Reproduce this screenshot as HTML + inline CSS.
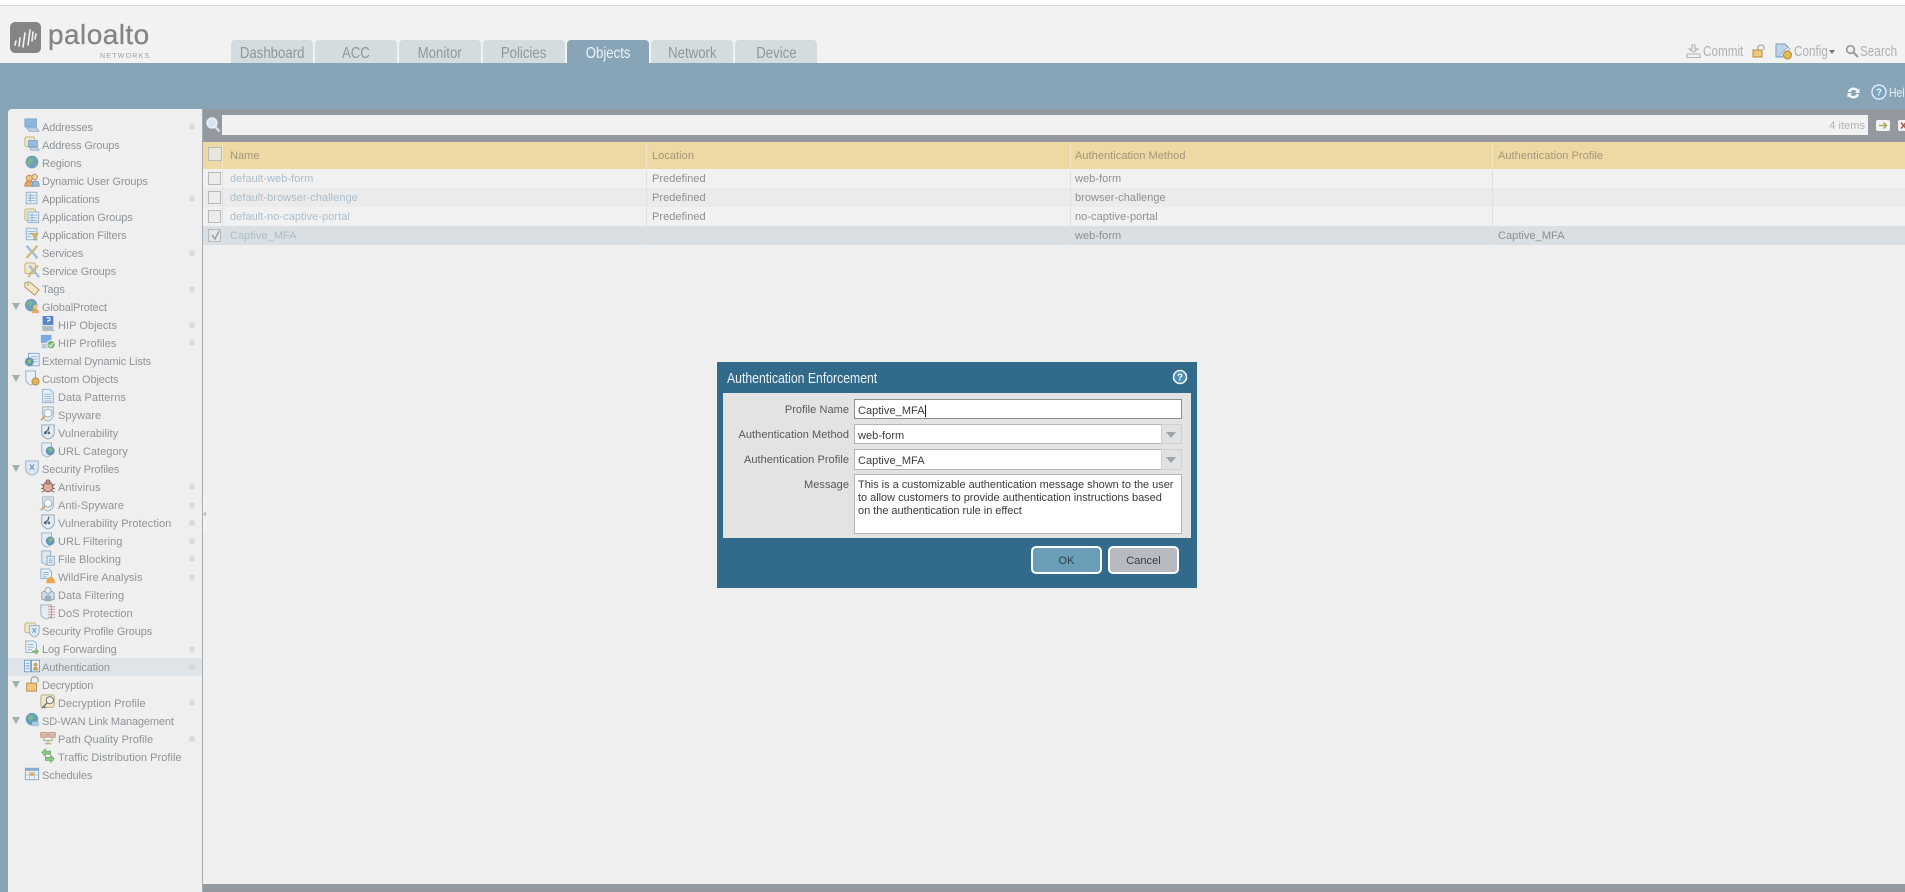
<!DOCTYPE html>
<html><head><meta charset="utf-8"><title>Authentication Enforcement</title>
<style>
html,body{margin:0;padding:0;width:1905px;height:892px;overflow:hidden;background:#fff}
body{position:relative;font:11px "Liberation Sans",sans-serif;letter-spacing:.05px;filter:blur(.3px)}
div,span,svg{position:absolute;box-sizing:border-box}
b{font-weight:normal;display:inline-block}
.tab{top:40px;height:23px;width:82px;background:#d3dcdf;border-radius:4px 4px 0 0;color:#8f979c;font:16px/27px "Liberation Sans",sans-serif;letter-spacing:0;text-align:center}
.tab b{transform:scaleX(.825)}
.tab.a{background:#88a4b7;color:#eef3f6}
.top{top:43px;font:15px/18px "Liberation Sans",sans-serif;color:#adb1b4;letter-spacing:0;transform:scaleX(.78);transform-origin:0 0}
.r{left:0;width:194px;height:18px}
.t{top:1px;line-height:18px;color:#8f9498;white-space:nowrap}
.t[style*="left:34px"]{letter-spacing:-.13px}
.dot{left:181px;top:6px;width:6px;height:6px;border-radius:50%;background:#dadada}
.ic{width:16px;height:16px;top:0}
.ic svg{width:16px;height:16px;left:0;top:0;opacity:.88}
.tri{left:4px;top:5px;width:0;height:0;border:4.5px solid transparent;border-top:7px solid #a3b0b0;border-bottom:0}
.row{left:203px;right:0;height:19px}
.cb{left:5px;top:3px;width:13px;height:13px;background:#ececec;border:1px solid #b9b9b9}
.n{left:27px;top:1px;line-height:19px;color:#abbeca;white-space:nowrap}
.c{top:1px;line-height:19px;color:#8f8f8f;white-space:nowrap}
.hd{color:#a0977a;line-height:27px;white-space:nowrap}
.lbl{width:126px;left:723px;text-align:right;color:#55595c;line-height:14px}
.f{left:854px;width:328px;background:#fff;border:1px solid #b5b5b5;color:#3b3b3b;padding:4px 0 0 3px;line-height:13px;white-space:nowrap}
.ab{left:1161px;width:21px;background:#dfe1e2;border:1px solid #d0d0d0}
.ab i{position:absolute;left:4px;top:7px;border:5.5px solid transparent;border-top:6px solid #9ba4aa;border-bottom:0}
.btn{top:546px;width:71px;height:28px;border:2px solid #fff;border-radius:5px;text-align:center;line-height:27px;color:#2f3f4a}
</style></head><body>
<svg width="0" height="0" style="left:0;top:0">
<defs>
<symbol id="mon" viewBox="0 0 18 18"><rect x="1" y="1" width="13" height="9" fill="#7fb0dc" stroke="#6f9cc4"/><path d="M3 11h11l3 4H6z" fill="#b9cfe2" stroke="#8aa6bf"/></symbol>
<symbol id="mong" viewBox="0 0 18 18"><rect x="1" y="1" width="11" height="11" rx="2" fill="#f1e7c6" stroke="#b8a76a"/><rect x="5" y="5" width="10" height="7" fill="#8db6dc" stroke="#6f9cc4"/><path d="M6 13h9l2 3H8z" fill="#b9cfe2" stroke="#8aa6bf"/></symbol>
<symbol id="glb" viewBox="0 0 18 18"><circle cx="9" cy="9" r="7.2" fill="#5f93b8"/><path d="M5 5l5-1 1 4-4 2-1 4-2-3zM12 11l3 0-2 4z" fill="#6fb07c"/></symbol>
<symbol id="usr" viewBox="0 0 18 18"><circle cx="6" cy="7" r="3.4" fill="#edc07a" stroke="#b5763c"/><path d="M1 16c0-4 2-6 5-6s5 2 5 6z" fill="#e79d50" stroke="#b5763c"/><circle cx="12" cy="5.5" r="3" fill="#f0d7a0" stroke="#a87c4c"/><path d="M9 16c0-4 1-6 4-6s4 2 4 6z" fill="#8db6dc" stroke="#5f86a8"/></symbol>
<symbol id="lst" viewBox="0 0 18 18"><rect x="2.5" y="2.5" width="12" height="13" fill="#e9f1f8" stroke="#7ba5c9"/><path d="M4 6h9M4 9h9M4 12h9M7 4v10" stroke="#7ba5c9" fill="none"/></symbol>
<symbol id="lstg" viewBox="0 0 18 18"><rect x="1" y="1" width="12" height="13" rx="2" fill="#f1e7c6" stroke="#b8a76a"/><rect x="4.500" y="4.500" width="12" height="12" fill="#e9f1f8" stroke="#7ba5c9"/><path d="M6 8h9M6 11h9M6 14h9M9 6v10" stroke="#7ba5c9" fill="none"/></symbol>
<symbol id="fil" viewBox="0 0 18 18"><rect x="2.500" y="2.500" width="12" height="13" fill="#e9f1f8" stroke="#7ba5c9"/><path d="M4 6h9M4 9h5M4 12h4" stroke="#7ba5c9"/><path d="M8 8h8l-3 4v4l-2-1v-3z" fill="#d9b25f" stroke="#a5843f" stroke-width=".6"/></symbol>
<symbol id="srv" viewBox="0 0 18 18"><path d="M3 2l5 6 3 3 4 5" stroke="#8db6dc" stroke-width="2.600" fill="none"/><path d="M15 2l-5 6-4 4-3 4" stroke="#c7b36b" stroke-width="2.600" fill="none"/></symbol>
<symbol id="srvg" viewBox="0 0 18 18"><rect x="1" y="1" width="12" height="12" rx="2" fill="#f1e7c6" stroke="#b8a76a"/><path d="M6 4l4 5 3 3 4 5" stroke="#8db6dc" stroke-width="2.400" fill="none"/><path d="M16 4l-5 5-3 3-3 5" stroke="#c7b36b" stroke-width="2.400" fill="none"/></symbol>
<symbol id="tag" viewBox="0 0 18 18"><path d="M1 3l5-1 11 9-5 6L1 8z" fill="#f5e6b8" stroke="#9a8a62"/><circle cx="4.500" cy="5" r="1" fill="#fff" stroke="#9a8a62" stroke-width=".6"/></symbol>
<symbol id="gp" viewBox="0 0 18 18"><circle cx="8" cy="8" r="7" fill="#5f93b8"/><path d="M3 6l5-3 2 4-4 2zM9 11l3 0-2 3z" fill="#6fb07c"/><circle cx="13" cy="10" r="2.500" fill="#edc07a"/><path d="M9 17c0-3 2-5 4-5s4 2 4 5z" fill="#e79d50"/></symbol>
<symbol id="hq" viewBox="0 0 18 18"><rect x="3" y="0" width="12" height="10" fill="#3f76c4"/><path d="M2 11h13v4l2 2H3z" fill="#aab6c2"/><path d="M7 2h4v3H9v2" stroke="#fff" fill="none" stroke-width="1.200"/></symbol>
<symbol id="hp" viewBox="0 0 18 18"><rect x="1" y="1" width="12" height="9" fill="#6fa3d8"/><path d="M2 11h11v5H2z" fill="#b6c3cd"/><circle cx="12.500" cy="12" r="4.800" fill="#6cb06a" stroke="#fff"/><path d="M10 12l2 2 3-4" stroke="#fff" fill="none"/></symbol>
<symbol id="edl" viewBox="0 0 18 18"><rect x="5" y="1.500" width="12" height="14" fill="#e9f1f8" stroke="#6f9cc4"/><path d="M8 5h7M8 8h7M8 11h7" stroke="#7ba5c9"/><circle cx="6" cy="11" r="5" fill="#4f8ab0"/><path d="M4 9l4-1 0 3-3 3z" fill="#7cb87c"/></symbol>
<symbol id="co" viewBox="0 0 18 18"><path d="M2 1h11v9c0 4-3 6-5.500 7C5 16 2 14 2 10z" fill="#e9f1f8" stroke="#88a4bd"/><circle cx="13" cy="13" r="4" fill="#e5ac3a" stroke="#a47a24"/></symbol>
<symbol id="dp" viewBox="0 0 18 18"><path d="M3 1.500h8l4 4v11H3z" fill="#e9f1f8" stroke="#7ba5c9"/><path d="M5 7h8M5 9.500h8M5 12h8M5 14.500h8" stroke="#7ba5c9"/></symbol>
<symbol id="spy" viewBox="0 0 18 18"><path d="M3 1h12v9c0 4-3 6-6 7-3-1-6-3-6-7z" fill="#e4ecf3" stroke="#88a4bd"/><circle cx="9" cy="8" r="4.500" fill="#f5f8fb" stroke="#8c9aa6"/><path d="M5.500 11.500L1 16" stroke="#d59a5a" stroke-width="2"/></symbol>
<symbol id="vul" viewBox="0 0 18 18"><path d="M2 1h14v9c0 4-4 6-7 7-3-1-7-3-7-7z" fill="#e4ecf3" stroke="#7e97ac"/><path d="M10 3l-1 4-3 2" stroke="#3d5a73" stroke-width="1.600" fill="none"/><circle cx="6" cy="10" r="1.700" fill="#3d5a73"/><circle cx="10" cy="10" r="1.500" fill="#3d5a73"/></symbol>
<symbol id="url" viewBox="0 0 18 18"><path d="M2 1h11v10c0 3-2 5-5 6-3-1-6-3-6-6z" fill="#e4ecf3" stroke="#88a4bd"/><circle cx="11.500" cy="10" r="5" fill="#4f8ab0"/><path d="M9 8l4-2 2 3-4 3z" fill="#73b56f"/></symbol>
<symbol id="shx" viewBox="0 0 18 18"><path d="M2 1h14v9c0 4-3 6-7 7-4-1-7-3-7-7z" fill="#dde8f2" stroke="#88a4bd"/><path d="M6.500 5l5 6M11.500 5l-5 6" stroke="#4a86c7" stroke-width="1.200"/></symbol>
<symbol id="av" viewBox="0 0 18 18"><circle cx="9" cy="10" r="5.500" fill="#e2a592" stroke="#6a4c44"/><circle cx="9" cy="4.500" r="2.400" fill="#b6837a" stroke="#6a4c44"/><path d="M1 7l4 2M1 12h3M2 16l3-2M17 7l-4 2M17 12h-3M16 16l-3-2" stroke="#6a4c44"/></symbol>
<symbol id="fb" viewBox="0 0 18 18"><path d="M2 1h10v13l-4 3-6-3z" fill="#dbe6f0" stroke="#88a4bd"/><rect x="8" y="7" width="8" height="10" fill="#e9f1f8" stroke="#6f9cc4"/><path d="M10 10h4M10 12h4M10 14h4" stroke="#6f9cc4"/></symbol>
<symbol id="wf" viewBox="0 0 18 18"><path d="M1 1h9l3 3v8H1z" fill="#e9f1f8" stroke="#7ba5c9"/><path d="M3 5h7M3 7.500h7M3 10h5" stroke="#7ba5c9"/><path d="M7 17c0-4 3-7 5-7s5 3 5 7z" fill="#ee9a32"/></symbol>
<symbol id="df" viewBox="0 0 18 18"><path d="M2 7c2-1 3-1 3-1h8s3 1 3 3v6l-7 2-7-2z" fill="#cdd9e3" stroke="#7e97ac"/><circle cx="9" cy="5" r="3.400" fill="#e6edf3" stroke="#7e97ac"/><path d="M5 16c0-4 2-6 4-6s4 2 4 6z" fill="#8fa8bc"/></symbol>
<symbol id="dos" viewBox="0 0 18 18"><path d="M1 1h12v10c0 3-2 5-6 6-3-1-6-3-6-6z" fill="#e4ecf3" stroke="#88a4bd"/><path d="M13 1v16M9 3h8M9 6h8M9 9h8M9 12h8M9 15h8" stroke="#c58b8b"/></symbol>
<symbol id="spg" viewBox="0 0 18 18"><rect x="1" y="1" width="12" height="11" rx="2" fill="#f1e7c6" stroke="#b8a76a"/><path d="M6 4h11v7c0 3-3 5-5.500 6C9 16 6 14 6 11z" fill="#dde8f2" stroke="#88a4bd"/><path d="M9.500 7l4 5M13.500 7l-4 5" stroke="#4a86c7"/></symbol>
<symbol id="log" viewBox="0 0 18 18"><path d="M2 1h9l3 3v10H2z" fill="#e9f1f8" stroke="#7ba5c9"/><path d="M4 5h7M4 8h7M4 11h5" stroke="#7ba5c9"/><path d="M9 12h4v-3l4 4-4 4v-3H9z" fill="#78ad5c"/></symbol>
<symbol id="au" viewBox="0 0 18 18"><rect x="0.500" y="2.500" width="7" height="13" fill="#eef3f8" stroke="#5f93c2"/><path d="M2 6h4M2 9h4M2 12h4" stroke="#5f93c2"/><rect x="8.500" y="2.500" width="9" height="13" fill="#eef3f8" stroke="#5f93c2"/><circle cx="13" cy="7.500" r="2.200" fill="#c49a5a"/><path d="M10 14c0-3 1-4 3-4s3 1 3 4z" fill="#c49a5a"/></symbol>
<symbol id="dec" viewBox="0 0 18 18"><path d="M8 8V5c0-2 1-4 4-4s4 2 4 4v2" stroke="#a5a5a5" stroke-width="1.600" fill="none"/><rect x="3" y="8" width="11" height="9" fill="#efc36e" stroke="#aa7b2d"/></symbol>
<symbol id="key" viewBox="0 0 18 18"><rect x="1" y="1" width="15" height="14" rx="2" fill="#f1e7c6" stroke="#a89a6a"/><circle cx="11" cy="7" r="4" fill="#f5f5ef" stroke="#555"/><path d="M8 10l-6 6M4 14l2 2" stroke="#555" stroke-width="1.400"/></symbol>
<symbol id="sd" viewBox="0 0 18 18"><circle cx="9" cy="8" r="7" fill="#4f92bd"/><path d="M4 6l5-3 2 4-4 3zM11 11l3-1-2 4z" fill="#73b56f"/><rect x="9" y="11" width="8" height="5" fill="#9fc5de"/></symbol>
<symbol id="pq" viewBox="0 0 18 18"><rect x="1" y="3" width="7" height="5" fill="#eecbc0" stroke="#c26f5a"/><rect x="10" y="3" width="7" height="5" fill="#eecbc0" stroke="#c26f5a"/><path d="M1 5.500h16M4.500 8v4h9V8M9 12v3M5 15.500h8" stroke="#9a9a6a" fill="none"/></symbol>
<symbol id="td" viewBox="0 0 18 18"><path d="M2 5l4-4v2.500h6V7H6v2.500zM16 12l-4 4.500V14H6v-3.500h6V8z" fill="#7ec07a" stroke="#4f9a4f" stroke-width=".7"/></symbol>
<symbol id="sch" viewBox="0 0 18 18"><rect x="1.500" y="2.500" width="15" height="13" fill="#eef3f8" stroke="#6f9cc4"/><rect x="1.500" y="2.500" width="15" height="3" fill="#7ba5c9"/><path d="M6 5v10M11.500 5v10M2 10h14" stroke="#9abad3"/><rect x="7" y="7" width="4" height="4" fill="#e5a23a"/></symbol>
</defs></svg>

<!-- header -->
<div style="left:0;top:5px;width:1905px;height:1px;background:#dcdcdc"></div>
<div style="left:0;top:6px;width:1905px;height:57px;background:#f2f2f2"></div>

<!-- logo -->
<svg style="left:10px;top:22px" width="31" height="31" viewBox="0 0 31 31"><rect width="31" height="31" rx="5" fill="#858585"/><path d="M5 23l1-4M9 24l1-8M13 25l2-14M18 23l2-15M22 19l1-9M25 17l1-5" stroke="#f2f2f2" stroke-width="1.600" stroke-linecap="round"/></svg>
<div style="left:48px;top:20px;font:28px/30px 'Liberation Sans',sans-serif;color:#858585;letter-spacing:.45px;-webkit-text-stroke:.3px #858585">paloalto</div>
<div style="left:100px;top:52px;font:7px/9px 'Liberation Sans',sans-serif;color:#a0a0a0;letter-spacing:1.25px">NETWORKS</div>

<div class="tab" style="left:231px"><b>Dashboard</b></div>
<div class="tab" style="left:315px"><b>ACC</b></div>
<div class="tab" style="left:399px"><b>Monitor</b></div>
<div class="tab" style="left:483px"><b>Policies</b></div>
<div class="tab a" style="left:567px"><b>Objects</b></div>
<div class="tab" style="left:651px"><b>Network</b></div>
<div class="tab" style="left:735px"><b>Device</b></div>

<!-- top right -->
<svg style="left:1686px;top:44px" width="15" height="15" viewBox="0 0 15 15"><path d="M6 1h3v4h3l-4.500 3L3 5h3zM1 10h13v3.500H1z" fill="none" stroke="#b3b3b3" stroke-width="1.100"/></svg>
<div class="top" style="left:1703px">Commit</div>
<svg style="left:1752px;top:44px" width="14" height="14" viewBox="0 0 14 14"><path d="M6 6V4c0-2 1-3 3-3s3 1 3 3v2" stroke="#aaa" fill="none" stroke-width="1.300"/><rect x="1" y="6" width="9" height="7" fill="#efc77d" stroke="#b98a38"/></svg>
<svg style="left:1775px;top:43px" width="18" height="17" viewBox="0 0 18 17"><path d="M1 1h9l3 3v10H1z" fill="#bcd3ea" stroke="#7e9fbe"/><path d="M4 13L13 4l2 2-9 8z" fill="#e8f0f6" stroke="#7e9fbe" stroke-width=".6"/><circle cx="12.500" cy="12" r="4" fill="#e6bd54" stroke="#ab8a30"/></svg>
<div class="top" style="left:1794px">Config</div>
<div style="left:1829px;top:50px;width:0;height:0;border:3.500px solid transparent;border-top:4px solid #777;border-bottom:0"></div>
<svg style="left:1845px;top:44px" width="14" height="14" viewBox="0 0 14 14"><circle cx="5.500" cy="5.500" r="3.800" fill="none" stroke="#9a9a9a" stroke-width="1.700"/><path d="M8.500 8.500L13 13" stroke="#9a9a9a" stroke-width="2.200"/></svg>
<div class="top" style="left:1860px">Search</div>

<!-- blue bar -->
<div style="left:0;top:63px;width:1905px;height:829px;background:#88a4b7"></div>
<svg style="left:1846px;top:86px" width="15" height="14" viewBox="0 0 15 14"><path d="M2 6c0-2.500 2.500-4.500 5.500-4.500 2 0 3.500 1 4.500 2l1.500-1v4.500H9l1.500-1.500C9.800 4.500 8.800 4 7.500 4 6 4 5 5 4.500 6zM13 8c0 2.500-2.500 4.500-5.500 4.500-2 0-3.500-1-4.500-2l-1.500 1V7H6L4.500 8.500C5.200 9.500 6.200 10 7.500 10 9 10 10 9 10.500 8z" fill="#f4f7f9"/></svg>
<svg style="left:1871px;top:84px" width="16" height="16" viewBox="0 0 16 16"><circle cx="8" cy="8" r="7" fill="#79a5c2" stroke="#e4edf3" stroke-width="1.400"/><text x="8" y="11.500" font-size="10" font-weight="bold" font-family="Liberation Sans" text-anchor="middle" fill="#eef4f8">?</text></svg>
<div style="left:1889px;top:85px;font:13px/15px 'Liberation Sans',sans-serif;color:#e8eef2;width:16px;overflow:hidden;white-space:nowrap;letter-spacing:0"><b style="transform:scaleX(.8);transform-origin:0 0">Help</b></div>

<!-- main -->
<div style="left:203px;top:109px;width:1702px;height:783px;background:#efefef"></div>
<div style="left:203px;top:109px;width:1702px;height:33px;background:#93999f"></div>
<div style="left:222px;top:115px;width:1646px;height:20px;background:#f2f2f2;color:#b3b3b3;text-align:right;line-height:22px;padding-right:3px">4 items</div>
<svg style="left:205px;top:116px" width="16" height="17" viewBox="0 0 16 17"><circle cx="7" cy="7" r="4.800" fill="#d5e5f0" stroke="#e8eff4" stroke-width="1.800"/><path d="M10.500 11l4 4.500" stroke="#dce3e8" stroke-width="2.400"/></svg>
<svg style="left:1876px;top:120px" width="14" height="11" viewBox="0 0 14 11"><rect width="14" height="11" rx="2" fill="#f2f2f2"/><path d="M3 5.500h7M7.500 2.500l3 3-3 3" stroke="#a9a85a" fill="none" stroke-width="1.500"/></svg>
<svg style="left:1898px;top:120px" width="7" height="11" viewBox="0 0 7 11"><rect width="14" height="11" rx="2" fill="#f2f2f2"/><path d="M3 2.500l5 6M8 2.500L3 8.500" stroke="#b0604a" stroke-width="1.600"/></svg>

<!-- table -->
<div style="left:203px;top:142px;width:1702px;height:27px;background:#eed9a4"></div>
<div class="cb" style="left:208px;top:147px;width:14px;height:14px;background:#e6e6df"></div>
<div class="hd" style="left:230px;top:143px">Name</div>
<div class="hd" style="left:652px;top:143px">Location</div>
<div class="hd" style="left:1075px;top:143px">Authentication Method</div>
<div class="hd" style="left:1498px;top:143px">Authentication Profile</div>
<div style="left:646px;top:142px;width:1px;height:27px;background:#f3e6c4"></div>
<div style="left:1070px;top:142px;width:1px;height:27px;background:#f3e6c4"></div>
<div style="left:1492px;top:142px;width:1px;height:27px;background:#f3e6c4"></div>
<div style="left:222px;top:142px;width:1px;height:27px;background:#f3e6c4"></div>

<div class="row" style="top:169px;background:#f1f1f1"><div class="cb"></div><div class="n">default-web-form</div><div class="c" style="left:449px">Predefined</div><div class="c" style="left:872px">web-form</div></div>
<div class="row" style="top:188px;background:#ebebeb"><div class="cb"></div><div class="n">default-browser-challenge</div><div class="c" style="left:449px">Predefined</div><div class="c" style="left:872px">browser-challenge</div></div>
<div class="row" style="top:207px;background:#f1f1f1"><div class="cb"></div><div class="n">default-no-captive-portal</div><div class="c" style="left:449px">Predefined</div><div class="c" style="left:872px">no-captive-portal</div></div>
<div class="row" style="top:226px;background:#d9dfe2"><div class="cb" style="background:#e4e7e9"><svg style="left:1px;top:0" width="11" height="11" viewBox="0 0 11 11"><path d="M2 5l3 4 4-8" stroke="#8b98a2" stroke-width="1.300" fill="none"/></svg></div><div class="n">Captive_MFA</div><div class="c" style="left:872px">web-form</div><div class="c" style="left:1295px">Captive_MFA</div></div>
<div style="left:222px;top:169px;width:1px;height:76px;background:#e0e0e0"></div>
<div style="left:646px;top:169px;width:1px;height:76px;background:#e0e0e0"></div>
<div style="left:1070px;top:169px;width:1px;height:76px;background:#e0e0e0"></div>
<div style="left:1492px;top:169px;width:1px;height:76px;background:#e0e0e0"></div>

<div style="left:203px;top:884px;width:1702px;height:8px;background:#93999f"></div>

<!-- sidebar -->
<div style="left:8px;top:109px;width:194px;height:783px;background:#efefef;border-radius:4px 0 0 0">
<div class="r" style="top:9px"><span class="ic" style="left:16px"><svg><use href="#mon"/></svg></span><div class="t" style="left:34px">Addresses</div><div class="dot"></div></div>
<div class="r" style="top:27px"><span class="ic" style="left:16px"><svg><use href="#mong"/></svg></span><div class="t" style="left:34px">Address Groups</div></div>
<div class="r" style="top:45px"><span class="ic" style="left:16px"><svg><use href="#glb"/></svg></span><div class="t" style="left:34px">Regions</div></div>
<div class="r" style="top:63px"><span class="ic" style="left:16px"><svg><use href="#usr"/></svg></span><div class="t" style="left:34px">Dynamic User Groups</div></div>
<div class="r" style="top:81px"><span class="ic" style="left:16px"><svg><use href="#lst"/></svg></span><div class="t" style="left:34px">Applications</div><div class="dot"></div></div>
<div class="r" style="top:99px"><span class="ic" style="left:16px"><svg><use href="#lstg"/></svg></span><div class="t" style="left:34px">Application Groups</div></div>
<div class="r" style="top:117px"><span class="ic" style="left:16px"><svg><use href="#fil"/></svg></span><div class="t" style="left:34px">Application Filters</div></div>
<div class="r" style="top:135px"><span class="ic" style="left:16px"><svg><use href="#srv"/></svg></span><div class="t" style="left:34px">Services</div><div class="dot"></div></div>
<div class="r" style="top:153px"><span class="ic" style="left:16px"><svg><use href="#srvg"/></svg></span><div class="t" style="left:34px">Service Groups</div></div>
<div class="r" style="top:171px"><span class="ic" style="left:16px"><svg><use href="#tag"/></svg></span><div class="t" style="left:34px">Tags</div><div class="dot"></div></div>
<div class="r" style="top:189px"><div class="tri"></div><span class="ic" style="left:16px"><svg><use href="#gp"/></svg></span><div class="t" style="left:34px">GlobalProtect</div></div>
<div class="r" style="top:207px"><span class="ic" style="left:32px"><svg><use href="#hq"/></svg></span><div class="t" style="left:50px">HIP Objects</div><div class="dot"></div></div>
<div class="r" style="top:225px"><span class="ic" style="left:32px"><svg><use href="#hp"/></svg></span><div class="t" style="left:50px">HIP Profiles</div><div class="dot"></div></div>
<div class="r" style="top:243px"><span class="ic" style="left:16px"><svg><use href="#edl"/></svg></span><div class="t" style="left:34px">External Dynamic Lists</div></div>
<div class="r" style="top:261px"><div class="tri"></div><span class="ic" style="left:16px"><svg><use href="#co"/></svg></span><div class="t" style="left:34px">Custom Objects</div></div>
<div class="r" style="top:279px"><span class="ic" style="left:32px"><svg><use href="#dp"/></svg></span><div class="t" style="left:50px">Data Patterns</div></div>
<div class="r" style="top:297px"><span class="ic" style="left:32px"><svg><use href="#spy"/></svg></span><div class="t" style="left:50px">Spyware</div></div>
<div class="r" style="top:315px"><span class="ic" style="left:32px"><svg><use href="#vul"/></svg></span><div class="t" style="left:50px">Vulnerability</div></div>
<div class="r" style="top:333px"><span class="ic" style="left:32px"><svg><use href="#url"/></svg></span><div class="t" style="left:50px">URL Category</div></div>
<div class="r" style="top:351px"><div class="tri"></div><span class="ic" style="left:16px"><svg><use href="#shx"/></svg></span><div class="t" style="left:34px">Security Profiles</div></div>
<div class="r" style="top:369px"><span class="ic" style="left:32px"><svg><use href="#av"/></svg></span><div class="t" style="left:50px">Antivirus</div><div class="dot"></div></div>
<div class="r" style="top:387px"><span class="ic" style="left:32px"><svg><use href="#spy"/></svg></span><div class="t" style="left:50px">Anti-Spyware</div><div class="dot"></div></div>
<div class="r" style="top:405px"><span class="ic" style="left:32px"><svg><use href="#vul"/></svg></span><div class="t" style="left:50px">Vulnerability Protection</div><div class="dot"></div></div>
<div class="r" style="top:423px"><span class="ic" style="left:32px"><svg><use href="#url"/></svg></span><div class="t" style="left:50px">URL Filtering</div><div class="dot"></div></div>
<div class="r" style="top:441px"><span class="ic" style="left:32px"><svg><use href="#fb"/></svg></span><div class="t" style="left:50px">File Blocking</div><div class="dot"></div></div>
<div class="r" style="top:459px"><span class="ic" style="left:32px"><svg><use href="#wf"/></svg></span><div class="t" style="left:50px">WildFire Analysis</div><div class="dot"></div></div>
<div class="r" style="top:477px"><span class="ic" style="left:32px"><svg><use href="#df"/></svg></span><div class="t" style="left:50px">Data Filtering</div></div>
<div class="r" style="top:495px"><span class="ic" style="left:32px"><svg><use href="#dos"/></svg></span><div class="t" style="left:50px">DoS Protection</div></div>
<div class="r" style="top:513px"><span class="ic" style="left:16px"><svg><use href="#spg"/></svg></span><div class="t" style="left:34px">Security Profile Groups</div></div>
<div class="r" style="top:531px"><span class="ic" style="left:16px"><svg><use href="#log"/></svg></span><div class="t" style="left:34px">Log Forwarding</div><div class="dot"></div></div>
<div class="r" style="top:549px;background:#dfe4e8"><span class="ic" style="left:16px"><svg><use href="#au"/></svg></span><div class="t" style="left:34px">Authentication</div><div class="dot"></div></div>
<div class="r" style="top:567px"><div class="tri"></div><span class="ic" style="left:16px"><svg><use href="#dec"/></svg></span><div class="t" style="left:34px">Decryption</div></div>
<div class="r" style="top:585px"><span class="ic" style="left:32px"><svg><use href="#key"/></svg></span><div class="t" style="left:50px">Decryption Profile</div><div class="dot"></div></div>
<div class="r" style="top:603px"><div class="tri"></div><span class="ic" style="left:16px"><svg><use href="#sd"/></svg></span><div class="t" style="left:34px">SD-WAN Link Management</div></div>
<div class="r" style="top:621px"><span class="ic" style="left:32px"><svg><use href="#pq"/></svg></span><div class="t" style="left:50px">Path Quality Profile</div><div class="dot"></div></div>
<div class="r" style="top:639px"><span class="ic" style="left:32px"><svg><use href="#td"/></svg></span><div class="t" style="left:50px">Traffic Distribution Profile</div></div>
<div class="r" style="top:657px"><span class="ic" style="left:16px"><svg><use href="#sch"/></svg></span><div class="t" style="left:34px">Schedules</div></div>
</div>
<div style="left:202px;top:109px;width:1px;height:783px;background:#a8acb0"></div>
<div style="left:203px;top:497px;width:4px;height:34px;background:#f4f4f4"></div>
<div style="left:203px;top:511px;width:0;height:0;border:3px solid transparent;border-right:3px solid #bbb;border-left:0"></div>

<!-- dialog -->
<div style="left:717px;top:362px;width:480px;height:226px;background:#316a8a"></div>
<div style="left:727px;top:370px;font:15px/18px 'Liberation Sans',sans-serif;color:#edf3f6;letter-spacing:0;white-space:nowrap;transform:scaleX(.815);transform-origin:0 0">Authentication Enforcement</div>
<svg style="left:1172px;top:369px" width="16" height="16" viewBox="0 0 16 16"><circle cx="8" cy="8" r="6.500" fill="#4d8eb2" stroke="#eef5f9" stroke-width="1.600"/><text x="8" y="11.500" font-size="10" font-weight="bold" font-family="Liberation Sans" text-anchor="middle" fill="#fff">?</text></svg>
<div style="left:723px;top:393px;width:468px;height:145px;background:#e3e3e3"></div>
<div class="lbl" style="top:403px">Profile Name</div>
<div class="lbl" style="top:428px">Authentication Method</div>
<div class="lbl" style="top:453px">Authentication Profile</div>
<div class="lbl" style="top:478px">Message</div>
<div class="f" style="top:399px;height:20px;border-color:#8f8f8f;padding-top:5px">Captive_MFA<b style="border-left:1px solid #222;height:12px;vertical-align:top"></b></div>
<div class="f" style="top:424px;height:20px;padding-top:5px">web-form</div>
<div class="ab" style="top:424px;height:20px"><i></i></div>
<div class="f" style="top:449px;height:21px;padding-top:5px">Captive_MFA</div>
<div class="ab" style="top:449px;height:21px"><i></i></div>
<div class="f" style="top:474px;height:60px;letter-spacing:-.03px">This is a customizable authentication message shown to the user<br>to allow customers to provide authentication instructions based<br>on the authentication rule in effect</div>
<div class="btn" style="left:1031px;background:#6a9eb8">OK</div>
<div class="btn" style="left:1108px;background:#b7bac0">Cancel</div>
</body></html>
